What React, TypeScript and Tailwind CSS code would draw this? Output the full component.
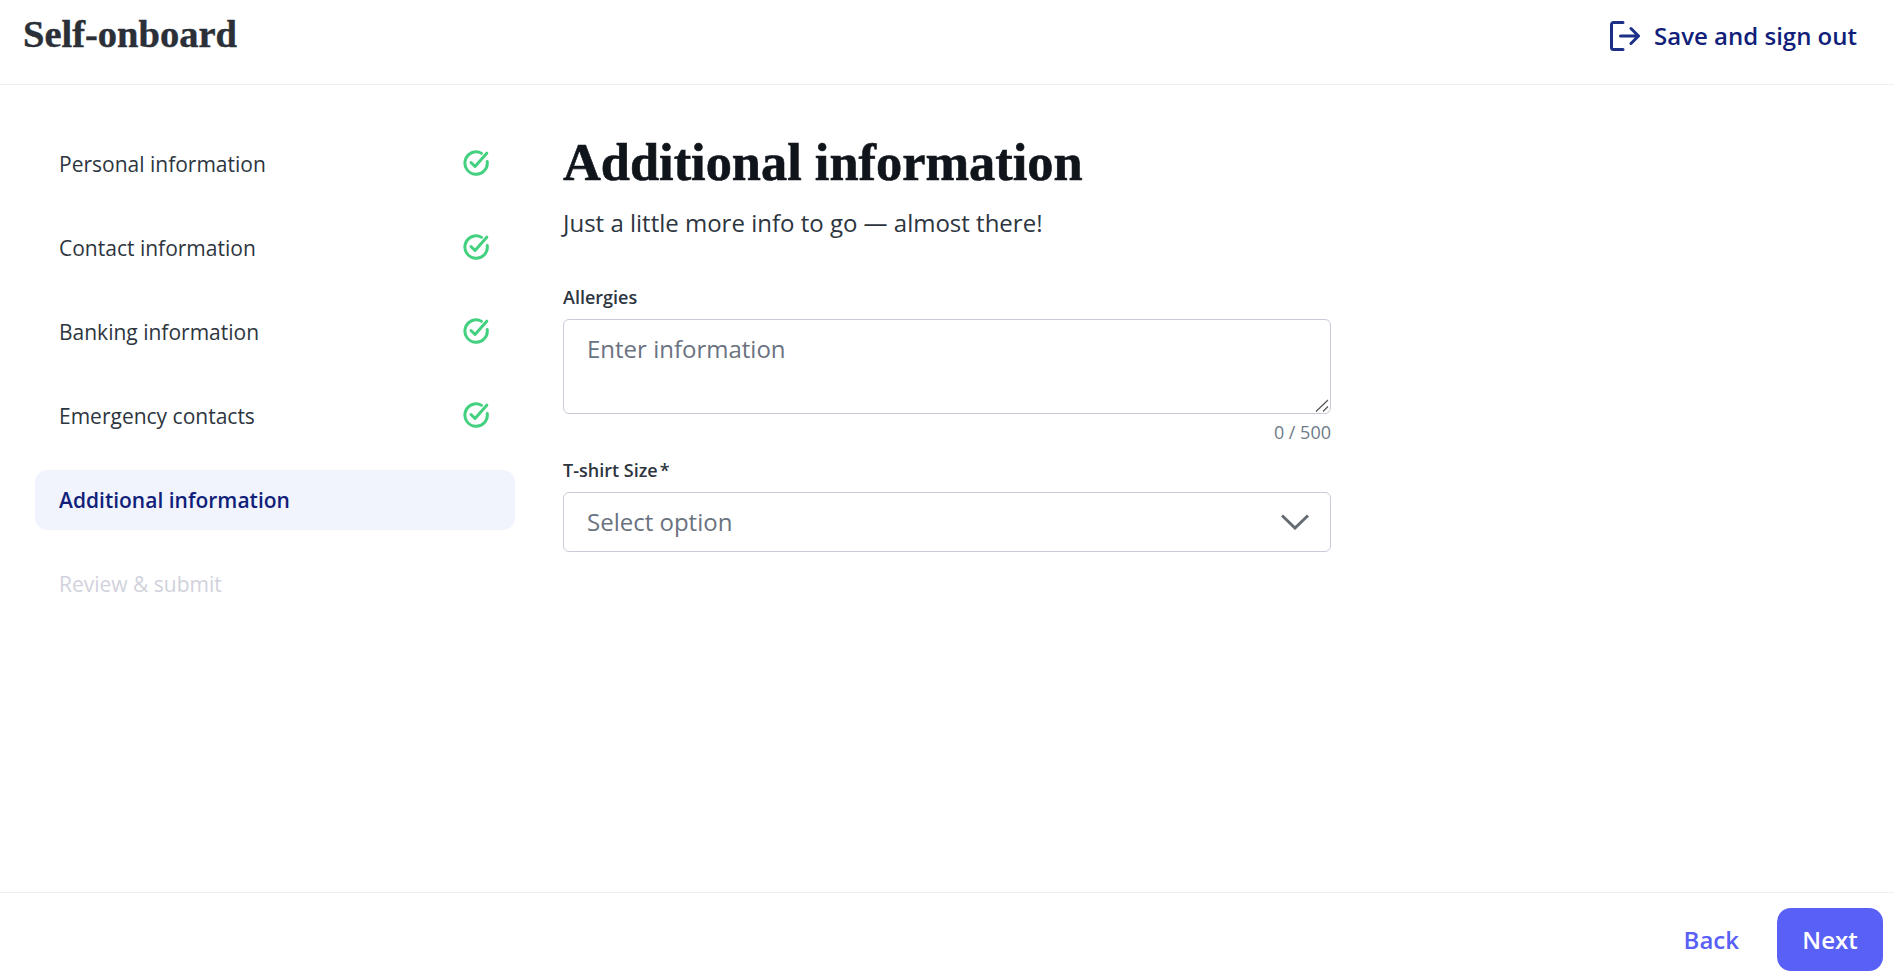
import React from 'react';

const steps = ['Personal information', 'Contact information', 'Banking information', 'Emergency contacts'];

function CheckIcon() {
    return (
        <svg viewBox="0 0 26 26" className="w-[26px] h-[26px] mb-[3px] text-[#43d07f]" fill="none" stroke="currentColor" strokeWidth="3" strokeLinecap="round" strokeLinejoin="round">
            <path d="M24.2 11.5A11.2 11.2 0 1 1 18.4 3.2" />
            <path d="M8 12.5l4 4L23.8 3.2" />
        </svg>
    );
}

function StepRow({ label }: { label: string }) {
    return (
        <div className="h-[60px] pl-[24px] pr-[26px] pt-[1px] flex items-center justify-between text-[21px] text-[#2d3540]">
            <span>{label}</span>
            <CheckIcon />
        </div>
    );
}

export default function App() {
    return (
        <div className="h-[980px] flex flex-col bg-white font-['Open_Sans',sans-serif] overflow-hidden">
            <header className="h-[85px] shrink-0 border-b border-[#eeeff2] pl-[23px] pr-[37px] flex items-start justify-between">
                <div className="font-['Liberation_Serif',serif] font-bold text-[38.5px] leading-[44px] mt-[12px] text-[#2b3038] [-webkit-text-stroke-width:0.4px]">Self-onboard</div>
                <div className="flex items-center gap-[14px] mt-[19px] text-[#111f7a] text-[24px] font-semibold leading-[34px]">
                    <svg viewBox="0 0 30 30" className="w-[30px] h-[30px] text-[#1c2f86]" fill="none" stroke="currentColor" strokeWidth="3" strokeLinecap="round" strokeLinejoin="round">
                        <path d="M13 1.5H3.5a2 2 0 0 0-2 2v23a2 2 0 0 0 2 2H13" />
                        <path d="M10.5 15h18M21 7.5l7.5 7.5-7.5 7.5" />
                    </svg>
                    <span>Save and sign out</span>
                </div>
            </header>

            <div className="flex-1 flex">
                <nav className="w-[515px] shrink-0 pl-[35px] pt-[49px] flex flex-col gap-[24px]">
                    {steps.map((s) => (
                        <StepRow key={s} label={s} />
                    ))}
                    <div className="h-[60px] pl-[24px] pt-[1px] flex items-center rounded-[12px] bg-[#f1f4fc] text-[21px] font-semibold text-[#111f7a]">Additional information</div>
                    <div className="h-[60px] pl-[24px] pt-[1px] flex items-center text-[21px] text-[#d1d2dc]">Review &amp; submit</div>
                </nav>

                <main className="w-[768px] ml-[48px]">
                    <h1 className="font-['Liberation_Serif',serif] font-bold text-[52.4px] leading-[60px] mt-[47px] text-[#10151c] [-webkit-text-stroke-width:0.6px]">Additional information</h1>
                    <p className="text-[24px] leading-[34px] mt-[14px] text-[#2d3540]">Just a little more info to go — almost there!</p>
                    <label className="block text-[18px] leading-[24px] font-semibold mt-[45px] text-[#2d3540]">Allergies</label>
                    <div className="relative mt-[10px]">
                        <textarea
                            placeholder="Enter information"
                            className="block w-full h-[95px] px-[23px] pt-[12px] pb-[8px] text-[24px] leading-[34px] border border-[#c9cbd8] rounded-[6px] resize-none placeholder:text-[#6b7280] outline-none"
                        />
                        <svg viewBox="0 0 14 14" className="absolute right-[2px] bottom-[1px] w-[14px] h-[14px] pointer-events-none" fill="none" stroke="#555555" strokeWidth="1.2">
                            <path d="M1 12.5L13 1M8 12.5l5-5" />
                        </svg>
                    </div>
                    <div className="text-right text-[18px] leading-[24px] mt-[6px] text-[#6f7b88]">0 / 500</div>
                    <label className="block text-[18px] leading-[24px] font-semibold mt-[14px] text-[#2d3540]">T-shirt Size<span className="ml-[2px]">*</span></label>
                    <div className="h-[60px] mt-[10px] pl-[23px] pr-[21px] flex items-center justify-between border border-[#c9cbd8] rounded-[6px] text-[24px] text-[#6b7280]">
                        <span>Select option</span>
                        <svg viewBox="0 0 28 16" className="w-[28px] h-[16px] text-[#646b72]" fill="none" stroke="currentColor" strokeWidth="3">
                            <path d="M1 1.5l13 12.5L27 1.5" />
                        </svg>
                    </div>
                </main>
            </div>

            <footer className="h-[88px] shrink-0 border-t border-[#eeeff2] pr-[11px] pt-[6px] flex items-center justify-end gap-[38px]">
                <button className="text-[24px] font-semibold text-[#5860f5]">Back</button>
                <button className="w-[106px] h-[63px] rounded-[14px] bg-[#5860f5] text-[24px] font-semibold text-white">Next</button>
            </footer>
        </div>
    );
}
